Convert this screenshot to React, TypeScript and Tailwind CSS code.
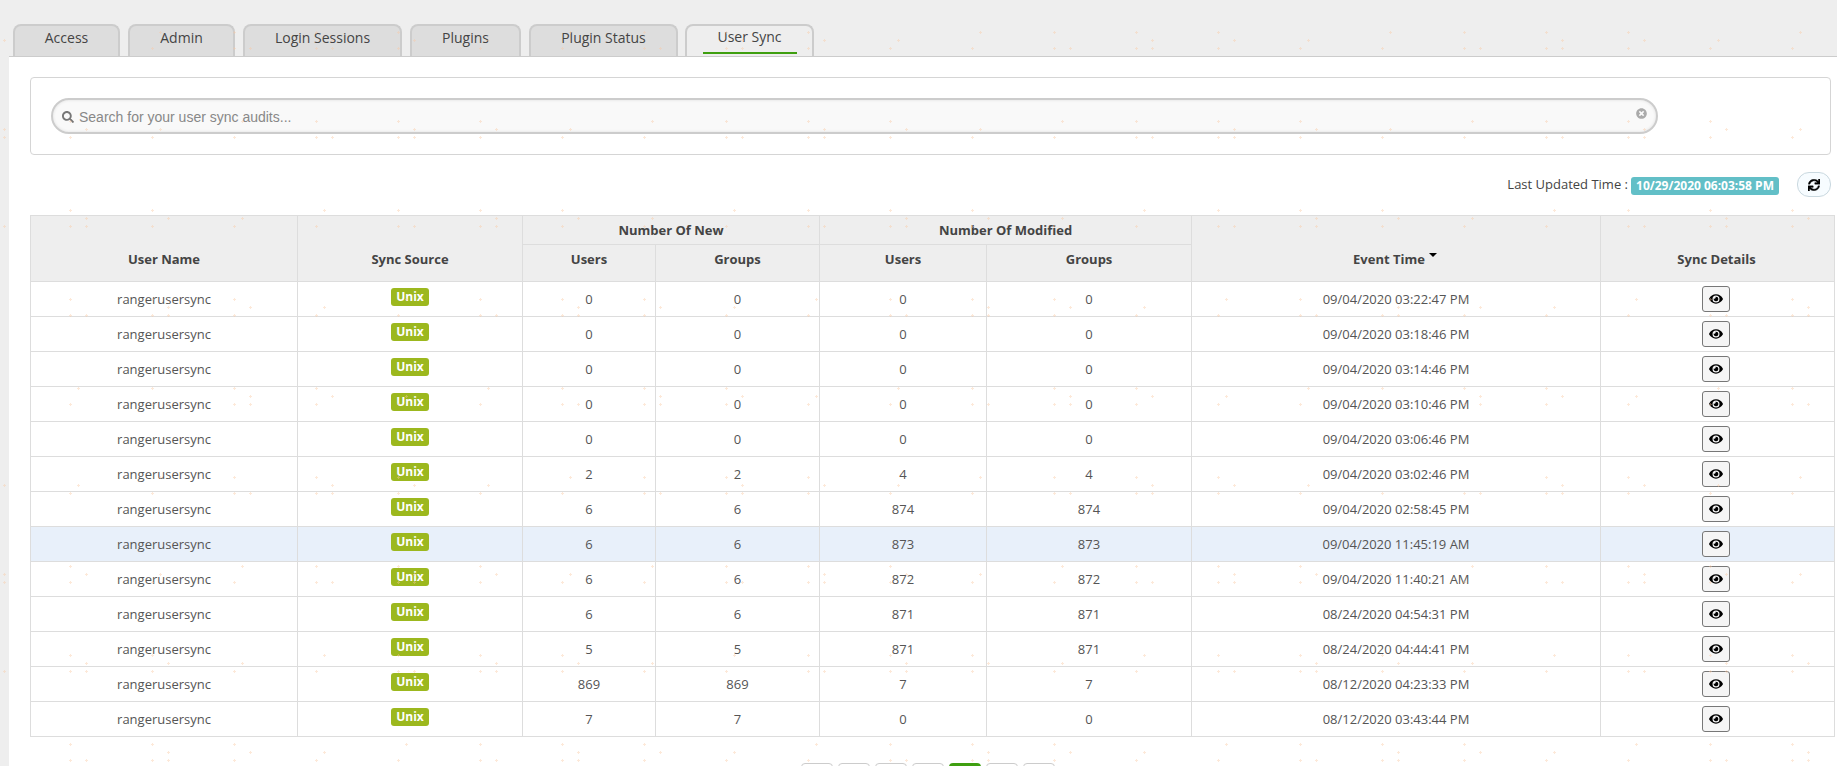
import { FaEye, FaSearch, FaSync, FaTimesCircle } from "react-icons/fa";

const tabs = [
  { label: "Access", width: "w-[107px]" },
  { label: "Admin", width: "w-[107px]" },
  { label: "Login Sessions", width: "w-[159px]" },
  { label: "Plugins", width: "w-[111px]" },
  { label: "Plugin Status", width: "w-[149px]" },
];

const rows = [
  [0, 0, 0, 0, "09/04/2020 03:22:47 PM"],
  [0, 0, 0, 0, "09/04/2020 03:18:46 PM"],
  [0, 0, 0, 0, "09/04/2020 03:14:46 PM"],
  [0, 0, 0, 0, "09/04/2020 03:10:46 PM"],
  [0, 0, 0, 0, "09/04/2020 03:06:46 PM"],
  [2, 2, 4, 4, "09/04/2020 03:02:46 PM"],
  [6, 6, 874, 874, "09/04/2020 02:58:45 PM"],
  [6, 6, 873, 873, "09/04/2020 11:45:19 AM"],
  [6, 6, 872, 872, "09/04/2020 11:40:21 AM"],
  [6, 6, 871, 871, "08/24/2020 04:54:31 PM"],
  [5, 5, 871, 871, "08/24/2020 04:44:41 PM"],
  [869, 869, 7, 7, "08/12/2020 04:23:33 PM"],
  [7, 7, 0, 0, "08/12/2020 03:43:44 PM"],
];

// faint speckle that sits over the whole screenshot
const specks: [number, number][] = [];
for (let band = 0; band < 9; band++) {
  const y = 32 + band * 89;
  for (let col = 0; col < 24; col++) {
    const x = -12 + col * 82;
    const h = (col * 7 + band * 13) % 5;
    specks.push([x, y + 16]);
    if (h === 1 || h === 3) specks.push([x + 16, y + 16]);
    if (h !== 2) specks.push([x + (h === 4 ? 8 : 0), y]);
    if (h === 0 || h === 3) specks.push([x + 16, y + 8]);
    if (h === 2) specks.push([x + 8, y + 8]);
  }
}

const Speckle = () => (
  <svg className="absolute left-0 top-0 pointer-events-none" width={1837} height={766}>
    {specks.map(([x, y], i) => (
      <path key={i} d={`M${x - 1} ${y + 0.5}h3M${x + 0.5} ${y - 1}v3`} stroke="#fbc9a3" strokeWidth={1} opacity={0.4} />
    ))}
  </svg>
);

const headBase = "border border-[#ddd] bg-[#eee] text-[13px] font-bold text-[#444] text-center p-0";
const headTop = `${headBase} align-middle pt-[2px]`;
const headLow = `${headBase} align-bottom pb-[12px]`;
const bodyCell = "border border-[#ddd] text-[13px] text-[#555] text-center align-middle p-0 pt-[1px]";

const App = () => {
  return (
    <div className="relative h-[766px] w-[1837px] overflow-hidden bg-[#eee] font-['Open_Sans',sans-serif]">
      <div className="flex gap-2 pl-[13px] pt-6 h-[56px]">
        {tabs.map((tab) => (
          <div
            key={tab.label}
            className={`${tab.width} h-[32px] border-2 border-b-0 border-[#ccc] rounded-t-lg bg-[#ddd] text-sm text-[#444] flex items-center justify-center pb-[7px]`}
          >
            {tab.label}
          </div>
        ))}
        <div className="-ml-px w-[129px] h-[32px] border-2 border-b-0 border-[#ccc] rounded-t-lg bg-[#eee] text-sm text-[#444] flex justify-center">
          <span className="w-[94px] h-[28px] border-b-2 border-[#3f9f10] text-center leading-[22px]">User Sync</span>
        </div>
      </div>

      <div className="ml-[9px] h-[710px] border-t border-[#ccc] bg-white pl-[21px] pt-5">
        <div className="w-[1801px] h-[78px] border border-[#d5d5d5] rounded-sm pl-5 pt-5">
          <div className="relative w-[1607px] h-9 rounded-[18px] border-2 border-[#ccc] bg-[#f9f9f9] shadow-[inset_0_0_3px_#ddd] flex items-center pl-[9px] pt-[2px] font-['Liberation_Sans',sans-serif] text-sm text-[#888]">
            <FaSearch className="text-[#777] text-xs mr-[5px]" />
            <span>Search for your user sync audits...</span>
            <FaTimesCircle className="absolute right-[9px] top-[8px] text-[#aaa] text-[11px]" />
          </div>
        </div>

        <div className="w-[1801px] h-[25px] mt-[17px] flex items-center justify-end text-[13px] text-[#444]">
          <span className="mt-[1px]">Last Updated Time :</span>
          <span className="ml-[3px] mt-[2px] h-[18px] w-[148px] rounded-[3px] bg-[#62bfc7] text-white text-xs font-bold flex items-center justify-center">
            10/29/2020 06:03:58 PM
          </span>
          <button className="ml-[18px] w-[34px] h-[25px] rounded-[12px] border border-[#c9d8df] bg-[#f7fcff] flex items-center justify-center text-black text-xs">
            <FaSync stroke="currentColor" strokeWidth={15} />
          </button>
        </div>

        <table className="mt-[18px] w-[1804px] table-fixed border-collapse">
          <colgroup>
            <col className="w-[267px]" />
            <col className="w-[225px]" />
            <col className="w-[133px]" />
            <col className="w-[164px]" />
            <col className="w-[167px]" />
            <col className="w-[205px]" />
            <col className="w-[409px]" />
            <col className="w-[234px]" />
          </colgroup>
          <thead>
            <tr className="h-[29px]">
              <th rowSpan={2} className={headLow}>User Name</th>
              <th rowSpan={2} className={headLow}>Sync Source</th>
              <th colSpan={2} className={headTop}>Number Of New</th>
              <th colSpan={2} className={headTop}>Number Of Modified</th>
              <th rowSpan={2} className={headLow}>
                <span className="relative pr-[14px]">
                  Event Time
                  <span className="absolute right-[2px] top-[3px] border-x-4 border-t-4 border-x-transparent border-t-black" />
                </span>
              </th>
              <th rowSpan={2} className={`${headLow} pr-[2px]`}>Sync Details</th>
            </tr>
            <tr className="h-[37px]">
              <th className={headLow}>Users</th>
              <th className={headLow}>Groups</th>
              <th className={headLow}>Users</th>
              <th className={headLow}>Groups</th>
            </tr>
          </thead>
          <tbody>
            {rows.map((row, i) => (
              <tr key={i} className={i === 7 ? "h-[35px] bg-[#e8f0fa]" : "h-[35px]"}>
                <td className={bodyCell}>rangerusersync</td>
                <td className={`${bodyCell} !align-top !pt-[5px]`}>
                  <span className="inline-flex w-[38px] h-[18px] items-center justify-center rounded-[3px] bg-[#9cb81e] text-white text-xs font-bold">
                    Unix
                  </span>
                </td>
                <td className={bodyCell}>{row[0]}</td>
                <td className={bodyCell}>{row[1]}</td>
                <td className={bodyCell}>{row[2]}</td>
                <td className={bodyCell}>{row[3]}</td>
                <td className={bodyCell}>{row[4]}</td>
                <td className={`${bodyCell} !pt-0 pr-1`}>
                  <button className="inline-flex w-[28px] h-[26px] items-center justify-center rounded-[3px] border border-[#777] bg-[#f5f5f5] text-black text-sm align-middle">
                    <FaEye />
                  </button>
                </td>
              </tr>
            ))}
          </tbody>
        </table>

        <div className="ml-[771px] mt-[26px] flex gap-[5px]">
          {[0, 1, 2, 3, 4, 5, 6].map((n) => (
            <div
              key={n}
              className={n === 4 ? "w-8 h-[30px] rounded-t-[4px] bg-[#3f9f10]" : "w-8 h-[30px] rounded-t-[4px] border border-[#ccc] bg-white"}
            />
          ))}
        </div>
      </div>

      <Speckle />
    </div>
  );
};

export default App;
